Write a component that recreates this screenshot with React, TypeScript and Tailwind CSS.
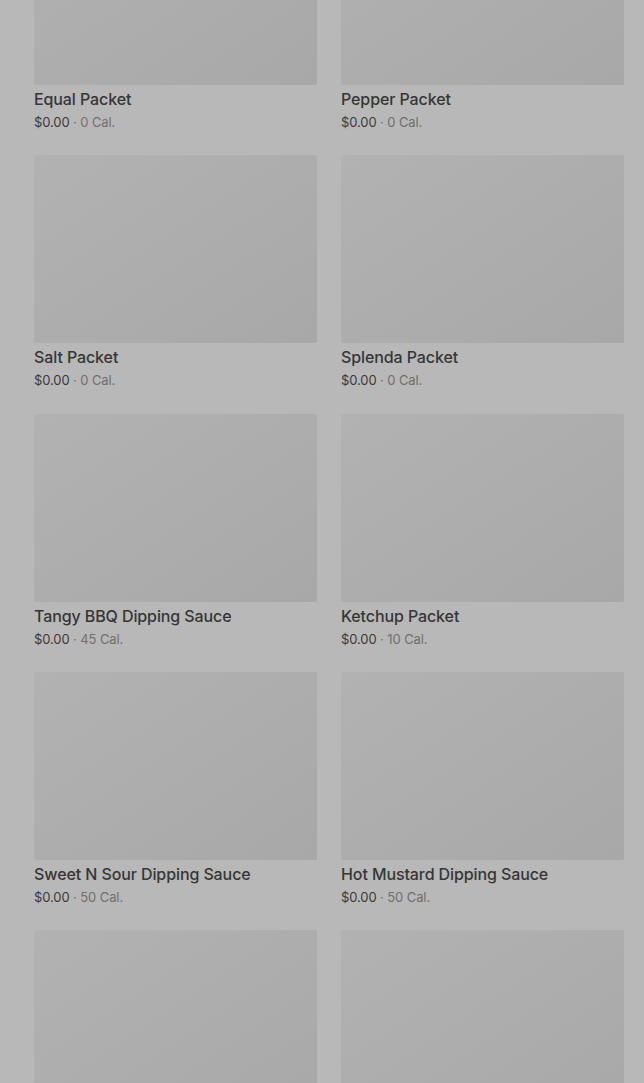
const items = [
  { name: "Equal Packet", cal: "0 Cal." },
  { name: "Pepper Packet", cal: "0 Cal." },
  { name: "Salt Packet", cal: "0 Cal." },
  { name: "Splenda Packet", cal: "0 Cal." },
  { name: "Tangy BBQ Dipping Sauce", cal: "45 Cal." },
  { name: "Ketchup Packet", cal: "10 Cal." },
  { name: "Sweet N Sour Dipping Sauce", cal: "50 Cal." },
  { name: "Hot Mustard Dipping Sauce", cal: "50 Cal." },
  { name: "", cal: "" },
  { name: "", cal: "" },
];

function ItemCard({ name, cal }: { name: string; cal: string }) {
  return (
    <div className="flex flex-col">
      <div className="h-[188px] w-full rounded-[2px] bg-gradient-to-br from-[#b2b2b2] to-[#a8a8a8]" />
      {name && (
        <>
          <span className="mt-[3px] text-[16px] leading-[22px] font-medium tracking-[-0.1px] text-[#363636]">
            {name}
          </span>
          <span className="mt-[3px] text-[13px] leading-[18px] tracking-[-0.1px] text-[#3a3a3a]">
            $0.00 <span className="text-[#6f6f6f]">· {cal}</span>
          </span>
        </>
      )}
    </div>
  );
}

export default function App() {
  return (
    <div
      className="h-[1083px] overflow-hidden bg-[#b8b8b8]"
      style={{ fontFamily: "Inter, Roboto, 'Liberation Sans', sans-serif" }}
    >
      <div className="-mt-[103px] grid grid-cols-2 gap-x-6 gap-y-[24.3px] pl-[34px] pr-[20px]">
        {items.map((item, index) => (
          <ItemCard key={index} name={item.name} cal={item.cal} />
        ))}
      </div>
    </div>
  );
}
